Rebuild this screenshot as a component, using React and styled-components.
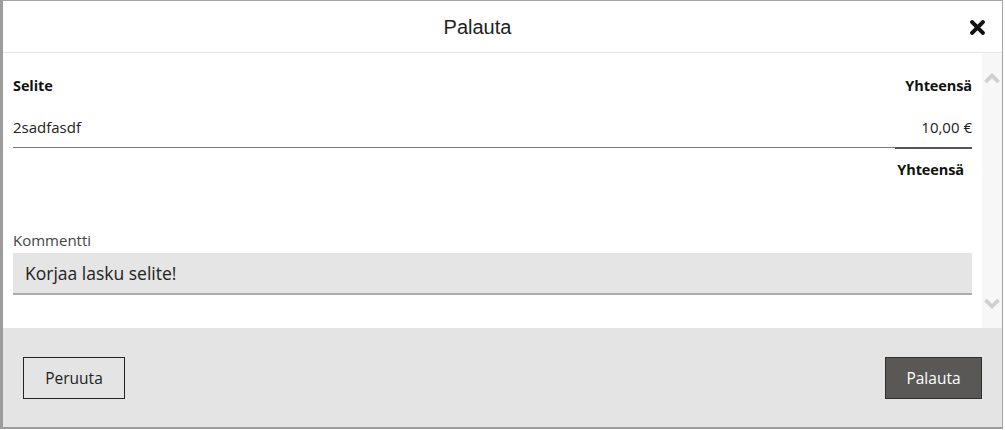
import styled, { createGlobalStyle } from "styled-components";

const GlobalStyle = createGlobalStyle`
  * {
    box-sizing: border-box;
  }
  body {
    margin: 0;
    background: #ffffff;
    font-family: "Open Sans", "Noto Sans", sans-serif;
    color: #222222;
  }
`;

const items = [{ id: 1, description: "2sadfasdf", total: "10,00 €" }];

const ChevronUp = () => (
  <svg width="16" height="12" viewBox="0 0 16 12">
    <path d="M1.5 10 L8 3.5 L14.5 10" fill="none" stroke="#cfcfcf" strokeWidth="3.6" />
  </svg>
);

const ChevronDown = () => (
  <svg width="16" height="12" viewBox="0 0 16 12">
    <path d="M1.5 2 L8 8.5 L14.5 2" fill="none" stroke="#cfcfcf" strokeWidth="3.6" />
  </svg>
);

const CloseIcon = () => (
  <svg width="15" height="15" viewBox="0 0 14 14">
    <path
      d="M2 2 L12 12 M12 2 L2 12"
      stroke="#111111"
      strokeWidth="3.8"
      strokeLinecap="round"
    />
  </svg>
);

const App = () => {
  return (
    <>
      <GlobalStyle />
      <Dialog>
        <Header>
          <Title>Palauta</Title>
          <CloseButton aria-label="Sulje">
            <CloseIcon />
          </CloseButton>
        </Header>
        <Body>
          <Content>
            <Row>
              <HeadCell>Selite</HeadCell>
              <HeadCell $right>Yhteensä</HeadCell>
            </Row>
            {items.map(item => (
              <Row key={item.id} $divider>
                <Cell>{item.description}</Cell>
                <Cell $right>{item.total}</Cell>
              </Row>
            ))}
            <FootRow>
              <FootCell>Yhteensä</FootCell>
            </FootRow>
            <Label>Kommentti</Label>
            <Input defaultValue="Korjaa lasku selite!" />
          </Content>
          <Scrollbar>
            <ChevronUp />
            <ChevronDown />
          </Scrollbar>
        </Body>
        <Footer>
          <Button>Peruuta</Button>
          <Button $primary>Palauta</Button>
        </Footer>
      </Dialog>
    </>
  );
};

const Dialog = styled.div`
  width: 1003px;
  height: 429px;
  display: flex;
  flex-direction: column;
  border-left: 3px solid #9c9c9c;
  border-top: 1px solid #a3a3a3;
  border-right: 1px solid #a3a3a3;
  border-bottom: 2px solid #9c9c9c;
  background: #ffffff;
`;

const Header = styled.div`
  height: 52px;
  flex-shrink: 0;
  display: flex;
  align-items: center;
  border-bottom: 1px solid #e6e6e6;
`;

const Title = styled.h1`
  flex: 1;
  margin: 0;
  text-align: center;
  font-family: "Liberation Sans", Arial, sans-serif;
  font-weight: 400;
  font-size: 20px;
  color: #222222;
  padding-top: 2px;
`;

const CloseButton = styled.button`
  width: 50px;
  height: 100%;
  border: none;
  background: transparent;
  display: flex;
  align-items: center;
  justify-content: center;
  padding: 2px 0 0 0;
  cursor: pointer;
`;

const Body = styled.div`
  height: 275px;
  display: flex;
`;

const Content = styled.div`
  flex: 1;
  padding: 11px 10px 0 10px;
  display: flex;
  flex-direction: column;
`;

const Row = styled.div`
  height: 42px;
  display: flex;
  align-items: center;
  justify-content: space-between;
  border-bottom: ${p => (p.$divider ? "1px solid #7a7a7a" : "none")};
`;

const HeadCell = styled.div`
  font-weight: 700;
  font-size: 14.5px;
  letter-spacing: -0.1px;
  color: #111111;
  text-align: ${p => (p.$right ? "right" : "left")};
`;

const Cell = styled(HeadCell)`
  font-weight: 400;
  font-size: 15px;
  letter-spacing: 0;
  color: #222222;
`;

const FootRow = styled.div`
  display: flex;
  justify-content: flex-end;
`;

const FootCell = styled.div`
  width: 77px;
  height: 42px;
  margin-top: -1px;
  border-top: 2px solid #555555;
  display: flex;
  align-items: center;
  justify-content: flex-end;
  padding-right: 8px;
  font-weight: 700;
  font-size: 14.5px;
  letter-spacing: -0.1px;
  color: #111111;
`;

const Label = styled.label`
  margin-top: 41px;
  font-size: 15px;
  line-height: 20px;
  color: #444444;
`;

const Input = styled.input`
  margin-top: 3px;
  height: 42px;
  width: 100%;
  border: none;
  border-bottom: 2px solid #acacac;
  background: #e5e5e5;
  padding: 0 12px;
  font-family: "Open Sans", "Noto Sans", sans-serif;
  font-size: 17.5px;
  color: #222222;
  outline: none;
`;

const Scrollbar = styled.div`
  width: 20px;
  background: #f7f7f7;
  display: flex;
  flex-direction: column;
  justify-content: space-between;
  align-items: center;
  padding: 19px 0 18px 0;
`;

const Footer = styled.div`
  flex: 1;
  background: #e4e4e4;
  display: flex;
  justify-content: space-between;
  align-items: flex-start;
  padding: 29px 20px 0 20px;
`;

const Button = styled.button`
  height: 42px;
  padding: 0 20px;
  min-width: ${p => (p.$primary ? "97px" : "102px")};
  border: 1px solid ${p => (p.$primary ? "#2e2e2e" : "#222222")};
  background: ${p => (p.$primary ? "#5a5856" : "transparent")};
  color: ${p => (p.$primary ? "#ffffff" : "#222222")};
  font-family: "Open Sans", "Noto Sans", sans-serif;
  font-size: 15.5px;
  cursor: pointer;
`;

export default App;
